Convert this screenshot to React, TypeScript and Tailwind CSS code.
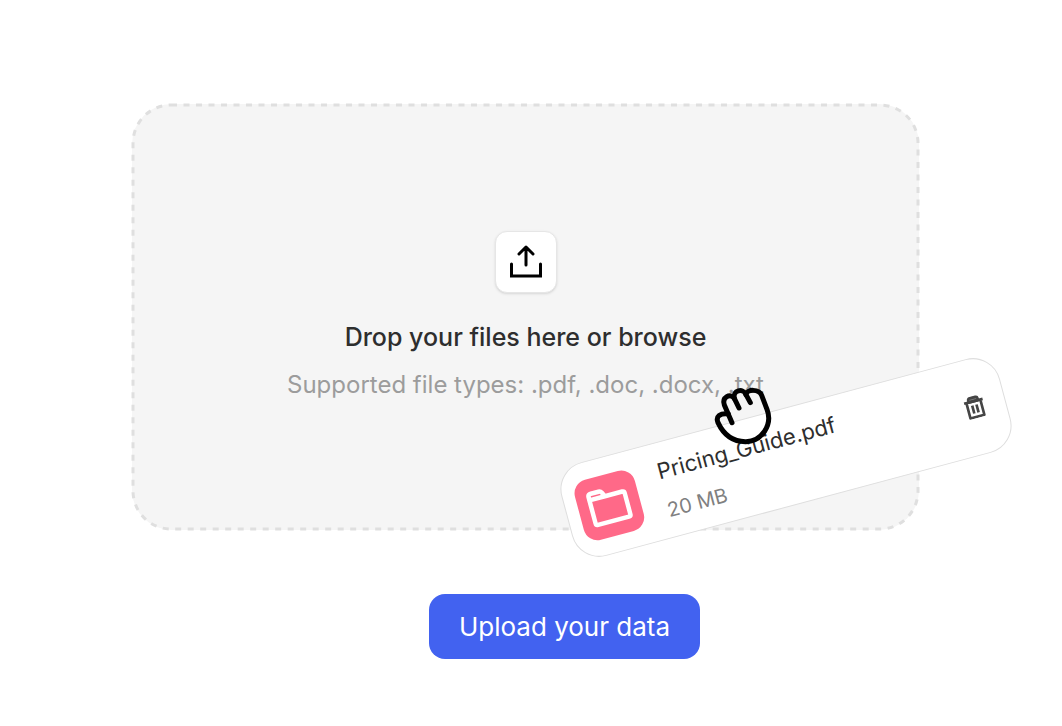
import { useRef, useState } from 'react';

interface UploadFile {
    name: string;
    size: string;
}

const ACCEPTED = '.pdf, .doc, .docx, .txt';

function UploadIcon() {
    return (
        <svg viewBox="0 0 34 34" className="size-[34px]" fill="none" stroke="currentColor" strokeWidth="3" aria-hidden="true">
            <path d="M17 20V2M10 9l7-7 7 7" strokeLinecap="round" strokeLinejoin="round" />
            <path d="M2.5 19v12h29V19" strokeLinecap="round" />
        </svg>
    );
}

function FolderIcon() {
    return (
        <svg viewBox="0 0 42 38" className="w-[42px]" fill="none" stroke="currentColor" strokeWidth="4.5" strokeLinecap="round" strokeLinejoin="round" aria-hidden="true">
            <path d="M3 9V6Q3 3 6 3H14Q16 3 17 5L19 9H37Q39 9 39 11V33Q39 35 37 35H5Q3 35 3 33V9H19" />
        </svg>
    );
}

function TrashIcon() {
    return (
        <svg viewBox="0 0 24 24" className="size-[23px]" fill="none" stroke="currentColor" strokeWidth="2.8" strokeLinejoin="round" aria-hidden="true">
            <path d="M2 6h20M4.5 6v16.500h15V6" />
            <path d="M7 6V4q0-2 2-2h6q2 0 2 2v2Z" fill="currentColor" fillOpacity="0.7" />
            <path d="M9.7 10v8.500M14.3 10v8.500" />
        </svg>
    );
}

function GrabHand() {
    return (
        <svg viewBox="40 48 180 180" className="size-[60px]" fill="none" stroke="black" strokeWidth="15" strokeLinecap="round" strokeLinejoin="round" aria-hidden="true">
            <path d="M97 158L74 105C66 82 92 68 104 85L118 114" />
            <path d="M104 85C98 61 131 53 139 74L152 98" />
            <path d="M139 74C142 57 178 56 186 76L202 118C220 165 185 216 137 215C95 215 70 190 55 158C47 139 62 129 86 132" />
        </svg>
    );
}

// CSS dashed borders give no control over the gap, so the outline is drawn
function DashedOutline() {
    return (
        <svg className="pointer-events-none absolute inset-0 size-full overflow-visible" fill="none" aria-hidden="true">
            <rect x="1" y="1" rx="38" className="h-[calc(100%-2px)] w-[calc(100%-2px)]"
                stroke="#dfdfdf" strokeWidth="3" strokeDasharray="6 6.5"
            />
        </svg>
    );
}

export default function App() {
    const inputRef = useRef<HTMLInputElement>(null);
    const [file, setFile] = useState<UploadFile | null>({ name: 'Pricing_Guide.pdf', size: '20 MB' });

    const handleChange = (e: React.ChangeEvent<HTMLInputElement>) => {
        const picked = e.target.files?.[0];
        if (picked) setFile({ name: picked.name, size: `${Math.ceil(picked.size / 1e6)} MB` });
    };

    return (
        <main className="flex min-h-screen flex-col overflow-hidden bg-white pt-[104px] pr-[143px] pb-16 pl-[132px] font-['Inter',sans-serif]">
            <div className="relative">
                <label htmlFor="files"
                    className="flex min-h-[426px] cursor-pointer flex-col items-center rounded-[40px] bg-[#f5f5f5] pt-[127px] text-center"
                >
                    <span className="flex size-[62px] items-center justify-center rounded-xl border border-[#e6e6e6] bg-white text-black shadow">
                        <UploadIcon />
                    </span>
                    <span className="mt-6 text-[25px] leading-10 font-medium text-[#2e2e2e]">Drop your files here or browse</span>
                    <span className="mt-2 text-[24px] leading-10 text-[#9c9c9c]">Supported file types: {ACCEPTED}</span>
                </label>
                <DashedOutline />
                <input ref={inputRef} id="files" type="file" accept={ACCEPTED} onChange={handleChange} className="sr-only" />

                {file && (
                    <div className="absolute top-[305px] right-[-94px] flex h-[97px] w-[454px] -rotate-15 items-center rounded-[28px]
                                    border border-[#dedede] bg-white pr-[19px] pl-3"
                    >
                        <div className="flex size-[62px] items-center justify-center rounded-[14px] bg-[#ff6988] text-white">
                            <FolderIcon />
                        </div>
                        <div className="ml-6 flex-1">
                            <p className="text-[22px] leading-10 text-[#2e2e2e]">{file.name}</p>
                            <p className="text-[20px] leading-10 text-[#808080]">{file.size}</p>
                        </div>
                        <button type="button" aria-label="Remove file" onClick={() => setFile(null)} className="text-[#454545]">
                            <TrashIcon />
                        </button>
                    </div>
                )}
                <div className="pointer-events-none absolute top-[282px] right-[146px]">
                    <GrabHand />
                </div>
            </div>

            <button type="button" onClick={() => inputRef.current?.click()}
                className="mt-16 ml-[78px] min-h-[65px] self-center rounded-2xl bg-[#4262f0] px-[30px] py-3 text-[26px] leading-10 text-white"
            >
                Upload your data
            </button>
        </main>
    );
}
